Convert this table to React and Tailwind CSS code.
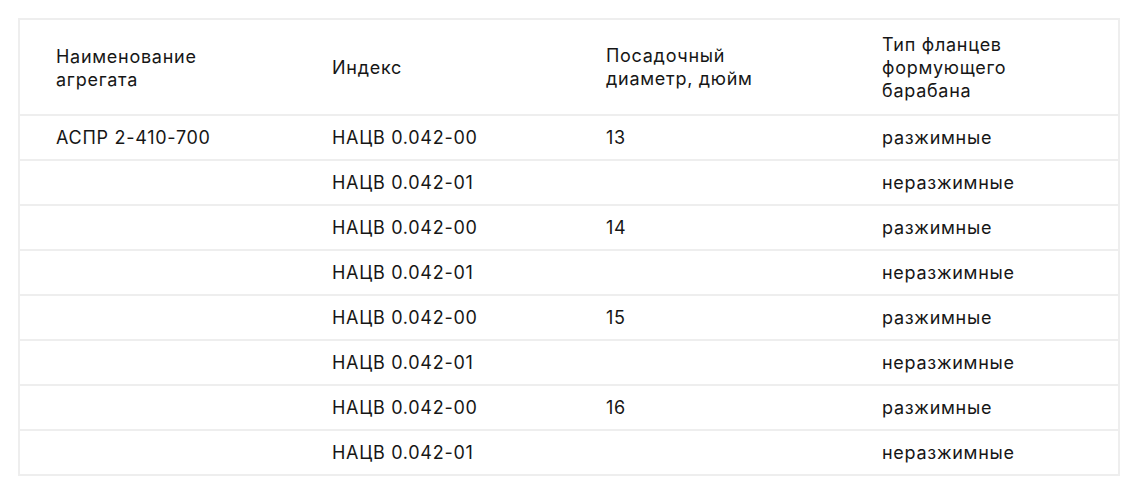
import React from 'react';

const rows = [
  { name: 'АСПР 2-410-700', index: 'НАЦВ 0.042-00', diam: '13', type: 'разжимные' },
  { name: '', index: 'НАЦВ 0.042-01', diam: '', type: 'неразжимные' },
  { name: '', index: 'НАЦВ 0.042-00', diam: '14', type: 'разжимные' },
  { name: '', index: 'НАЦВ 0.042-01', diam: '', type: 'неразжимные' },
  { name: '', index: 'НАЦВ 0.042-00', diam: '15', type: 'разжимные' },
  { name: '', index: 'НАЦВ 0.042-01', diam: '', type: 'неразжимные' },
  { name: '', index: 'НАЦВ 0.042-00', diam: '16', type: 'разжимные' },
  { name: '', index: 'НАЦВ 0.042-01', diam: '', type: 'неразжимные' },
];

export default function App() {
  return (
    <div className="min-h-screen bg-white pt-[18px] px-[18px] font-['Inter',sans-serif] text-[18px] leading-[23px] tracking-[0.04em] text-[#161616]">
      <table className="w-[1102px] table-fixed border-collapse border-2 border-[#eeeeee]">
        <colgroup>
          <col className="w-[277px]" />
          <col className="w-[274px]" />
          <col className="w-[276px]" />
          <col />
        </colgroup>
        <thead>
          <tr className="border-b-2 border-[#eeeeee]">
            <th className="pl-[36px] pr-4 pt-[13px] pb-[12px] text-left font-normal align-middle">
              Наименование<br />агрегата
            </th>
            <th className="pl-[36px] pr-4 text-left font-normal align-middle">Индекс</th>
            <th className="pl-[36px] pr-4 text-left font-normal align-middle">
              Посадочный<br />диаметр, дюйм
            </th>
            <th className="pl-[36px] pr-4 pt-[13px] pb-[12px] text-left font-normal align-middle">
              Тип фланцев<br />формующего<br />барабана
            </th>
          </tr>
        </thead>
        <tbody>
          {rows.map((r, i) => (
            <tr key={i} className="border-b-2 border-[#eeeeee]">
              <td className="pl-[36px] pr-4 py-[10px]">{r.name}</td>
              <td className="pl-[36px] pr-4 py-[10px]">{r.index}</td>
              <td className="pl-[36px] pr-4 py-[10px]">{r.diam}</td>
              <td className="pl-[36px] pr-4 py-[10px]">{r.type}</td>
            </tr>
          ))}
        </tbody>
      </table>
    </div>
  );
}
